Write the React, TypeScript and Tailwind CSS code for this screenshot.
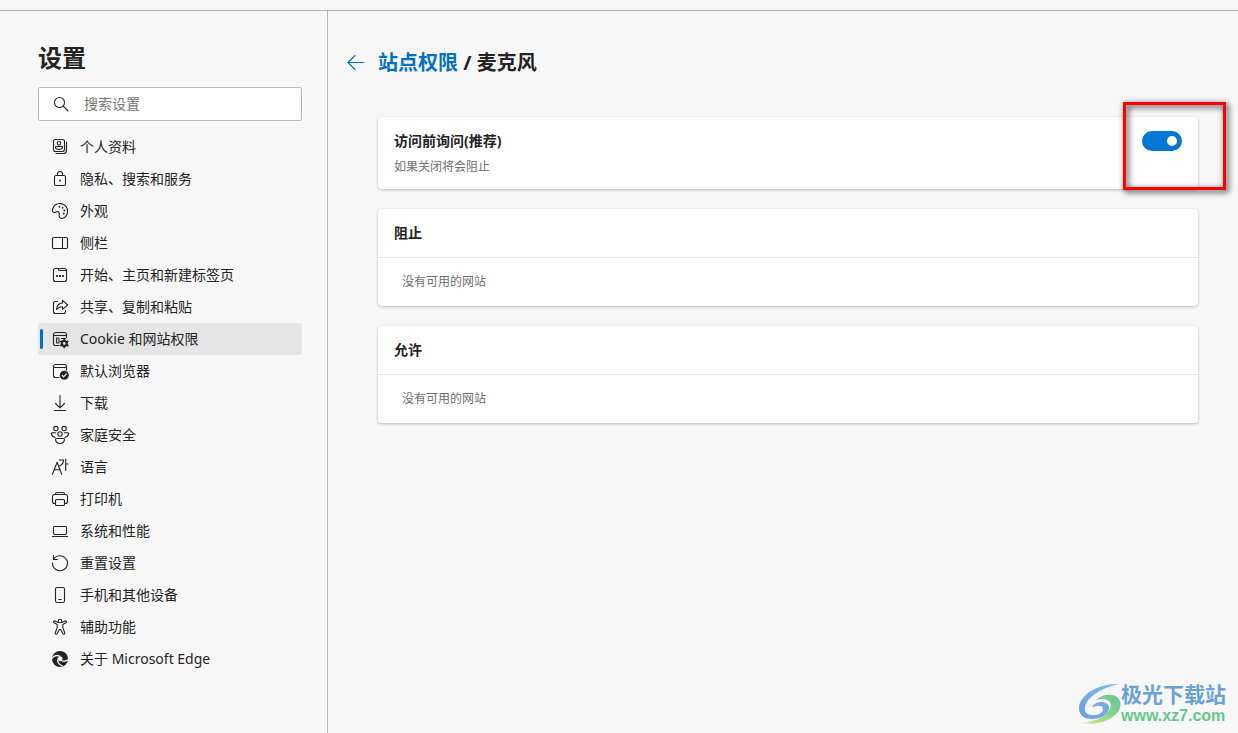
import type { ReactNode } from "react";

type NavItem = {
  label: string;
  icon: ReactNode;
  active?: boolean;
};

function Icon({ children }: { children: ReactNode }) {
  return (
    <svg
      viewBox="0 0 20 20"
      className="h-5 w-5 shrink-0"
      fill="none"
      stroke="currentColor"
      strokeWidth="1.1"
      strokeLinecap="round"
      strokeLinejoin="round"
      aria-hidden="true"
    >
      {children}
    </svg>
  );
}

const navItems: NavItem[] = [
  {
    label: "个人资料",
    icon: (
      <>
        <rect x="3.5" y="2.5" width="11" height="12" rx="2" />
        <circle cx="9" cy="6.3" r="1.8" />
        <path d="M5.5 9.5h7v.8c0 1.5-1.6 2.2-3.5 2.2s-3.5-.7-3.5-2.2zM16.5 5v8.5a3 3 0 0 1-3 3H6" />
      </>
    ),
  },
  {
    label: "隐私、搜索和服务",
    icon: (
      <>
        <rect x="4.5" y="6.5" width="11" height="10" rx="1.5" />
        <path d="M7.5 6.5V5a2.5 2.5 0 0 1 5 0v1.5" />
        <circle cx="10" cy="11.5" r=".9" fill="currentColor" stroke="none" />
      </>
    ),
  },
  {
    label: "外观",
    icon: (
      <>
        <path d="M2.5 8.5C3.6 4.6 7 2.3 10.7 2.6c4.3.4 7.3 4 6.9 8.2-.4 3.8-3 6.9-5.9 6.7-2.4-.2-2.8-2.3-2.5-4.1.3-1.9-.5-3-2-2.8-1.1.1-1.6.9-2.7.9-1.7 0-2.5-1.3-2-3z" />
        <g fill="currentColor" stroke="none">
          <circle cx="9.5" cy="5.8" r=".9" />
          <circle cx="12.7" cy="6.8" r=".9" />
          <circle cx="14.3" cy="9.5" r=".9" />
          <circle cx="13.8" cy="12.5" r=".9" />
        </g>
      </>
    ),
  },
  {
    label: "侧栏",
    icon: (
      <>
        <rect x="2.5" y="4.5" width="15" height="11" rx="1.2" />
        <path d="M12.5 4.5v11" />
      </>
    ),
  },
  {
    label: "开始、主页和新建标签页",
    icon: (
      <>
        <rect x="3.5" y="3.5" width="13" height="13" rx="2" />
        <path d="M8.5 3.5v1a1 1 0 0 0 1 1h7" />
        <path d="M6.8 11h.4M9.8 11h.4M12.8 11h.4" strokeWidth="1.9" />
      </>
    ),
  },
  {
    label: "共享、复制和粘贴",
    icon: (
      <>
        <path d="M7.5 4.5h-2a2 2 0 0 0-2 2v8a2 2 0 0 0 2 2h8a2 2 0 0 0 2-2v-1" />
        <path d="M12.5 3.3 17.7 8l-5.2 4.3V9.8c-2.7-.1-4.5.9-6 2.7.3-3.8 2.4-6.2 6-6.6z" />
      </>
    ),
  },
  {
    label: "Cookie 和网站权限",
    active: true,
    icon: (
      <>
        <path d="M9 16.5H5.5a2 2 0 0 1-2-2v-9a2 2 0 0 1 2-2h9a2 2 0 0 1 2 2v3M3.5 6.500h13M11.500 9.500h4" />
        <rect x="6.5" y="9" width="2.5" height="5" rx=".4" />
        <circle cx="14.3" cy="14.5" r="2.4" strokeWidth="2" />
        <path
          d="M14.3 10.7v1M14.3 17.3v1M11 12.6l.9.5M16.7 15.9l.9.5M11 16.4l.9-.5M16.7 13.1l.9-.5"
          strokeWidth="2"
        />
      </>
    ),
  },
  {
    label: "默认浏览器",
    icon: (
      <>
        <path d="M9 16.5H5.5a2 2 0 0 1-2-2v-9a2 2 0 0 1 2-2h9a2 2 0 0 1 2 2V9M3.5 6.5h13" />
        <circle cx="14.3" cy="14.3" r="4.5" fill="currentColor" stroke="none" />
        <path d="m12.3 14.5 1.3 1.3 2.7-2.8" stroke="#f7f7f7" />
      </>
    ),
  },
  {
    label: "下载",
    icon: <path d="M10 2.5v12M5.5 10.5l4.5 4.300 4.500-4.300M4.500 17.500h11" />,
  },
  {
    label: "家庭安全",
    icon: (
      <>
        <circle cx="5.9" cy="3.6" r="2.2" />
        <circle cx="14.1" cy="3.6" r="2.2" />
        <circle cx="10" cy="9" r="2.2" />
        <path d="M5.5 7.8H2.3c-.7 0-.9.5-.8 1.1.3 2 1.600 3.200 3.600 3.400M14.500 7.800h3.200c.7 0 .9.500.8 1.100-.3 2-1.600 3.200-3.600 3.400" />
        <path d="M6.5 13.5h7c.7 0 1.1.5 1 1.1-.4 2.4-2 3.9-4.5 3.9s-4.1-1.5-4.5-3.9c-.1-.6.3-1.1 1-1.1z" />
      </>
    ),
  },
  {
    label: "语言",
    icon: (
      <path d="m2.5 17.3 4.6-12 4.6 12M4.3 12.7h5.6M9.3 3h4.2c0 2.8-1.3 4.8-3.7 5.8M15.7 2v11.5M15.7 7H18" />
    ),
  },
  {
    label: "打印机",
    icon: (
      <>
        <path d="M5.5 5.5V5A1.5 1.5 0 0 1 7 3.5h6A1.5 1.5 0 0 1 14.5 5v.5M5.5 14.5h-1a2 2 0 0 1-2-2v-5a2 2 0 0 1 2-2h11a2 2 0 0 1 2 2v5a2 2 0 0 1-2 2h-1" />
        <rect x="5.5" y="10.5" width="9" height="6" rx="1" />
      </>
    ),
  },
  {
    label: "系统和性能",
    icon: (
      <>
        <rect x="3.5" y="5.5" width="13" height="8" rx="1.2" />
        <path d="M2.5 15.5h15" />
      </>
    ),
  },
  {
    label: "重置设置",
    icon: <path d="M3.5 2.5v4h4M3.5 6.5A7.5 7.5 0 1 1 2.5 10" />,
  },
  {
    label: "手机和其他设备",
    icon: (
      <>
        <rect x="5.5" y="2.5" width="9" height="15" rx="1.5" />
        <path d="M8.7 14.5h2.6" />
      </>
    ),
  },
  {
    label: "辅助功能",
    icon: (
      <>
        <circle cx="10" cy="4" r="1.8" />
        <path d="M8.2 5.5 4.900 4c-1.200-.5-2 1.200-.8 1.800l3.100 1.600v3l-1.900 5.300c-.5 1.500 1.400 2.100 2 .8l2-4h1.400l2 4c.6 1.300 2.500.7 2-.8l-1.900-5.300v-3l3.100-1.600c1.200-.6.4-2.300-.8-1.800l-3.300 1.500" />
      </>
    ),
  },
  {
    label: "关于 Microsoft Edge",
    icon: (
      <>
        <circle cx="10" cy="10" r="8" fill="currentColor" stroke="none" />
        <g stroke="#f7f7f7" strokeWidth="1.3">
          <path d="M2 9.200c2-2.500 5.200-3.200 8-1.900" />
          <path d="M8.300 9.300c-1.600 2.900.2 6.600 4 7.500" />
          <path d="M11.800 11.600c1.700.9 4 .6 6-.6" />
        </g>
        <circle cx="10.300" cy="9.900" r="2.300" fill="#f7f7f7" stroke="none" />
      </>
    ),
  },
];

function Sidebar() {
  return (
    <aside className="w-[328px] shrink-0 border-r border-[#b8b8b8] pr-[25px] pl-[38px] pt-[27px]">
      <h1 className="text-2xl leading-10 font-bold">设置</h1>
      <label className="mt-[9px] flex h-[34px] items-center rounded-xs border border-[#b8b8b8] bg-white pb-px pl-3">
        <Icon>
          <circle cx="8.5" cy="8.5" r="5" />
          <path d="m12.2 12.2 4.8 4.8" />
        </Icon>
        <input
          type="search"
          aria-label="搜索设置"
          placeholder="搜索设置"
          className="ml-[13px] w-full min-w-0 bg-transparent text-sm outline-none placeholder:text-[#767676]"
        />
      </label>
      <nav className="mt-[10px]">
        {navItems.map((item) => (
          <a
            key={item.label}
            href="#"
            aria-current={item.active ? "page" : undefined}
            className={
              item.active
                ? "flex h-8 items-center rounded-xs bg-[#e5e5e5] pl-[2px]"
                : "flex h-8 items-center pl-[2px]"
            }
          >
            <span
              className={
                item.active
                  ? "mr-[7px] h-5 w-[3px] rounded-xs bg-[#0070c9]"
                  : "mr-[7px] h-5 w-[3px]"
              }
            />
            <Icon>{item.icon}</Icon>
            <span className="ml-[10px] text-sm whitespace-nowrap">{item.label}</span>
          </a>
        ))}
      </nav>
    </aside>
  );
}

function SiteList({ title }: { title: string }) {
  return (
    <section className="rounded-sm bg-white shadow-[0_1px_3px_rgba(0,0,0,0.25)]">
      <h3 className="flex h-[49px] items-center border-b border-[#e8e8e8] px-4 text-sm font-bold">
        {title}
      </h3>
      <p className="flex h-12 items-center px-6 text-xs text-[#6e6e6e]">没有可用的网站</p>
    </section>
  );
}

function Watermark() {
  return (
    <div className="absolute right-3 bottom-[7px] flex items-center">
      <svg viewBox="0 0 42 42" className="h-[42px] w-[42px]" aria-hidden="true">
        <defs>
          <linearGradient id="swirlBlue" x1="0" y1="1" x2="1" y2="0">
            <stop offset="0" stopColor="#6c9fe0" />
            <stop offset="1" stopColor="#7dc0e8" />
          </linearGradient>
          <linearGradient id="swirlGreen" x1="0" y1="1" x2="1" y2="0">
            <stop offset="0" stopColor="#e4e57c" />
            <stop offset="0.5" stopColor="#8ad48a" />
            <stop offset="1" stopColor="#62c49c" />
          </linearGradient>
        </defs>
        <path
          fill="url(#swirlBlue)"
          d="M40 1C20 0 0 12 0 25c0 8 6 11 13 11 9 0 16-4 17-10 1-5-3-7-8-7-4 0-8 2-9 6 4-3 11-3 11 1s-6 7-11 6c-5 0-8-3-7-8C8 14 22 5 40 1z"
        />
        <path
          fill="url(#swirlGreen)"
          d="M17 17c6-6 17-7 22-2 5 5 2 13-3 17C28 39 16 42 3 40c12-1 24-6 28-14 3-7-3-12-14-9z"
        />
      </svg>
      <div>
        <p className="text-[21px] leading-6 font-bold text-[#6aa1d6]">极光下载站</p>
        <p className="font-['Liberation_Sans',sans-serif] text-base leading-5 font-bold text-[#66c88c]">
          www.xz7.com
        </p>
      </div>
    </div>
  );
}

export default function App() {
  return (
    <div className="relative flex min-h-screen flex-col bg-[#f7f7f7] font-['Noto_Sans','Noto_Sans_CJK_SC',sans-serif] text-[#242424]">
      <div className="h-[11px] border-b border-[#b8b8b8]" />
      <div className="flex flex-1">
        <Sidebar />
        <main className="min-w-0 flex-1 pt-8 pr-10 pl-[18px]">
          <header className="flex h-10 items-center">
            <button type="button" aria-label="返回" className="mr-3 text-[#0070c9]">
              <Icon>
                <path d="M18 9.5H2.5M9 2.5l-7 7 7 7" />
              </Icon>
            </button>
            <h2 className="text-xl font-bold">
              <a href="#" className="text-[#0070c9]">
                站点权限
              </a>{" "}
              / 麦克风
            </h2>
          </header>

          <div className="mt-[34px] ml-8 flex flex-col gap-5">
            <section className="relative flex h-[72px] items-start justify-between rounded-sm bg-white px-4 pt-[14px] shadow-[0_1px_3px_rgba(0,0,0,0.25)]">
              <div>
                <label htmlFor="ask-first" className="block text-sm leading-5 font-bold">
                  访问前询问(推荐)
                </label>
                <p className="mt-2 text-xs text-[#6e6e6e]">如果关闭将会阻止</p>
              </div>
              <input
                id="ask-first"
                type="checkbox"
                role="switch"
                defaultChecked
                className="flex h-5 w-10 appearance-none items-center rounded-full bg-[#8a8a8a] px-[5px] before:h-[10px] before:w-[10px] before:rounded-full before:bg-white checked:justify-end checked:bg-[#0078d4]"
              />
              {/* callout around the switch */}
              <div className="pointer-events-none absolute -top-[15px] -right-7 h-[88px] w-[103px] border-3 border-[#ff0000] drop-shadow-[2px_2px_3px_rgba(0,0,0,0.9)]" />
            </section>
            <SiteList title="阻止" />
            <SiteList title="允许" />
          </div>
        </main>
      </div>
      <Watermark />
    </div>
  );
}
